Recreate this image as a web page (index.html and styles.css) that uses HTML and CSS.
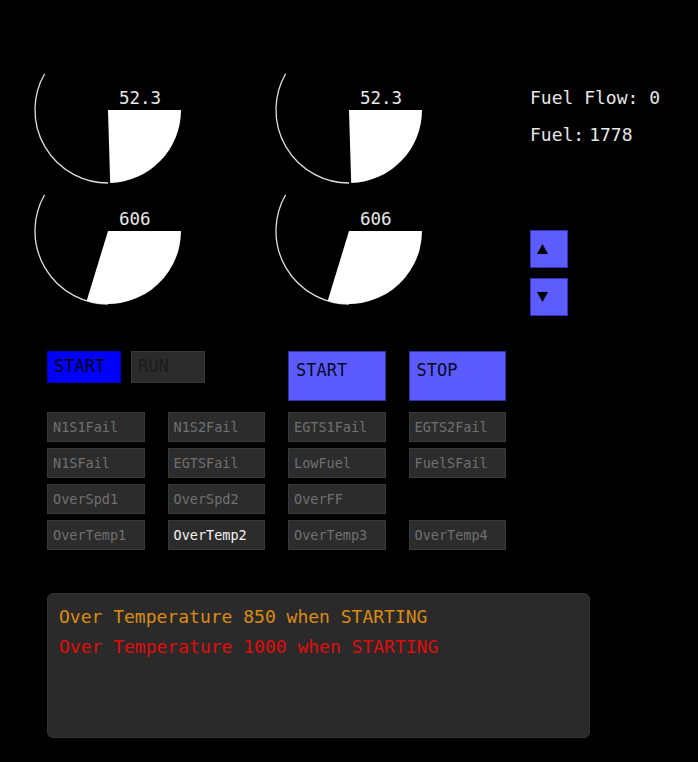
FILE: index.html
```html
<!DOCTYPE html>
<html>
<head>
<meta charset="utf-8">
<link rel="stylesheet" href="styles.css">
</head>
<body>
<div class="app">
  <div class="top">
    <div class="gauges">
      <svg class="gauge" viewBox="0 0 241 121" width="241" height="121">
        <path class="arc" d="M44.6 13.8 A73 73 0 0 0 108 123"/>
        <path class="pie" d="M108 50 L181 50 A73 73 0 0 1 110.2 123 Z"/>
        <text class="gval" x="119" y="44">52.3</text>
      </svg>
      <svg class="gauge" viewBox="0 0 241 121" width="241" height="121">
        <path class="arc" d="M44.6 13.8 A73 73 0 0 0 108 123"/>
        <path class="pie" d="M108 50 L181 50 A73 73 0 0 1 110.2 123 Z"/>
        <text class="gval" x="119" y="44">52.3</text>
      </svg>
      <svg class="gauge" viewBox="0 0 241 121" width="241" height="121">
        <path class="arc" d="M44.6 13.8 A73 73 0 0 0 108 123"/>
        <path class="pie" d="M108 50 L181 50 A73 73 0 0 1 86.7 119.8 Z"/>
        <text class="gval" x="119" y="44">606</text>
      </svg>
      <svg class="gauge" viewBox="0 0 241 121" width="241" height="121">
        <path class="arc" d="M44.6 13.8 A73 73 0 0 0 108 123"/>
        <path class="pie" d="M108 50 L181 50 A73 73 0 0 1 86.7 119.8 Z"/>
        <text class="gval" x="119" y="44">606</text>
      </svg>
    </div>
    <div class="side">
      <div class="readout">Fuel Flow: 0</div>
      <div class="readout">Fuel:<span class="num">1778</span></div>
      <div class="arrows">
        <div class="arrow-btn">
          <svg width="11" height="10" viewBox="0 0 11 10"><polygon points="5.5,0 11,10 0,10"/></svg>
        </div>
        <div class="arrow-btn">
          <svg width="11" height="10" viewBox="0 0 11 10"><polygon points="0,0 11,0 5.5,10"/></svg>
        </div>
      </div>
    </div>
  </div>

  <div class="controls">
    <div class="mode-group">
      <div class="mode-btn mode-on">START</div>
      <div class="mode-btn mode-off">RUN</div>
    </div>
    <div class="big-btn">START</div>
    <div class="big-btn">STOP</div>

    <div class="fail">N1S1Fail</div>
    <div class="fail">N1S2Fail</div>
    <div class="fail">EGTS1Fail</div>
    <div class="fail">EGTS2Fail</div>

    <div class="fail">N1SFail</div>
    <div class="fail">EGTSFail</div>
    <div class="fail">LowFuel</div>
    <div class="fail">FuelSFail</div>

    <div class="fail">OverSpd1</div>
    <div class="fail">OverSpd2</div>
    <div class="fail">OverFF</div>
    <div class="empty"></div>

    <div class="fail">OverTemp1</div>
    <div class="fail fail-active">OverTemp2</div>
    <div class="fail">OverTemp3</div>
    <div class="fail">OverTemp4</div>
  </div>

  <div class="messages">
    <div class="msg msg-warn">Over Temperature 850 when STARTING</div>
    <div class="msg msg-alarm">Over Temperature 1000 when STARTING</div>
  </div>
</div>
</body>
</html>
```

FILE: styles.css
```css
html, body {
  margin: 0;
  padding: 0;
  background: #000;
}

body {
  width: 698px;
  height: 762px;
  overflow: hidden;
  font-family: "DejaVu Sans Mono", monospace;
  color: #ddd;
}

.app {
  display: flex;
  flex-direction: column;
}

.top {
  display: flex;
  margin-top: 60px;
}

.gauges {
  display: grid;
  grid-template-columns: 241px 241px;
  grid-template-rows: 121px 121px;
}

.gauge {
  overflow: visible;
  display: block;
}

.arc {
  fill: none;
  stroke: #e0e0e0;
  stroke-width: 1.3;
}

.pie {
  fill: #fff;
}

.gval {
  fill: #e8e8e8;
  font-family: "DejaVu Sans Mono", monospace;
  font-size: 17.5px;
}

.side {
  margin-left: 48px;
  padding-top: 19px;
  display: flex;
  flex-direction: column;
}

.readout {
  font-size: 18px;
  line-height: 37px;
  color: #e6e6e6;
  white-space: pre;
}

.num {
  margin-left: 5px;
}

.arrows {
  margin-top: 77px;
  display: flex;
  flex-direction: column;
  gap: 10px;
}

.arrow-btn {
  width: 30px;
  height: 36px;
  background: #5c5cff;
  border: 1px solid #3434b0;
  display: flex;
  align-items: center;
  padding-left: 6px;
  box-sizing: content-box;
}

.arrow-btn svg {
  display: block;
  fill: #000;
}

.controls {
  margin-top: 35px;
  padding-left: 47px;
  display: grid;
  grid-template-columns: 97.5px 97.5px 97.5px 97.5px;
  grid-template-rows: 55px 30px 30px 30px 30px;
  column-gap: 23px;
  row-gap: 6px;
}

.mode-group {
  grid-column: span 2;
  display: flex;
  gap: 10px;
  align-items: flex-start;
}

.mode-btn {
  width: 74px;
  height: 32px;
  box-sizing: border-box;
  font-size: 17px;
  line-height: 20px;
  padding: 4px 0 0 6px;
}

.mode-on {
  background: #0000ff;
  border: 1px solid #0000c8;
  color: #000;
}

.mode-off {
  background: #2b2b2b;
  border: 1px solid #3a3a3a;
  color: #1c1c1c;
}

.big-btn {
  height: 50px;
  box-sizing: border-box;
  background: #5b5bff;
  border: 1px solid #33339a;
  color: #0a0a1a;
  font-size: 17px;
  line-height: 20px;
  padding: 8px 0 0 7px;
}

.fail {
  box-sizing: border-box;
  height: 30px;
  background: #2c2c2c;
  border: 1px solid #393939;
  color: #707070;
  font-size: 13.5px;
  display: flex;
  align-items: center;
  padding-left: 5px;
}

.fail-active {
  color: #f2f2f2;
}

.messages {
  margin: 43px 0 0 47px;
  width: 543px;
  height: 145px;
  box-sizing: border-box;
  background: #2a2a2a;
  border: 1px solid #333;
  border-radius: 6px;
  padding: 8px 0 0 11px;
}

.msg {
  font-size: 18px;
  line-height: 30px;
  white-space: pre;
}

.msg-warn {
  color: #dc8a14;
}

.msg-alarm {
  color: #e00c0c;
}
```
